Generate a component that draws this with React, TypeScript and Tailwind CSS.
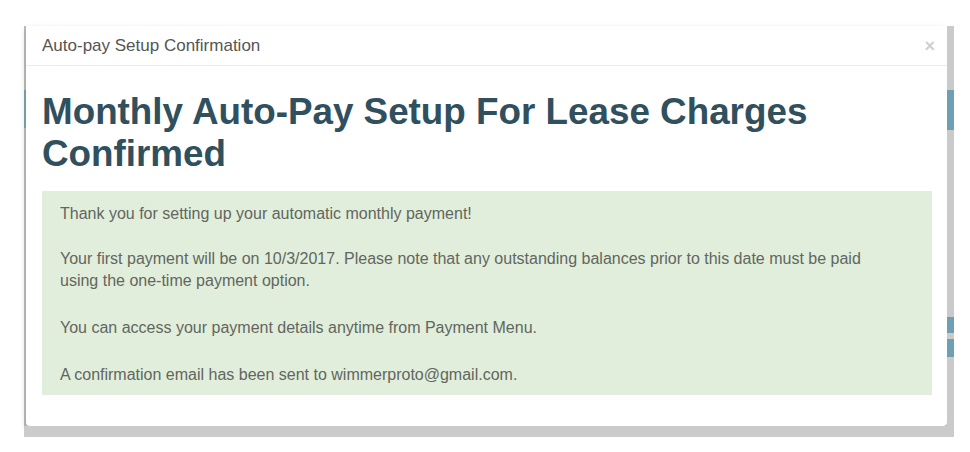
export default function App() {
  return (
    <div className="w-[970px] h-[452px] bg-white" style={{ fontFamily: '"Liberation Sans", Arial, sans-serif' }}>
      <div className="pt-[26px] pl-[24px]">
        <div className="w-[930px] flex flex-col bg-[#c9c9c9]">
          <div className="flex">
            {/* left strip of the page behind */}
            <div className="w-[2px] flex flex-col bg-[#bdbdbd]">
              <div className="h-[64px]" />
              <div className="h-[38px] bg-[#7fa7b4]" />
            </div>
            {/* modal */}
            <div className="w-[921px] h-[400px] bg-white rounded-b-[4px] shadow-[0_3px_6px_rgba(0,0,0,0.2)] flex flex-col">
              <div className="h-[40px] flex items-center justify-between pl-[16px] pr-[12px] border-b border-[#ececec]">
                <span className="text-[17px] text-[#555555]">Auto-pay Setup Confirmation</span>
                <span className="text-[18px] font-bold leading-none text-[#d0d0d0]">×</span>
              </div>
              <div className="pl-[16px] pr-[15px] pt-[25px]">
                <h1 className="text-[36.8px] leading-[42px] font-bold text-[#30505e] pr-[40px]">
                  Monthly Auto-Pay Setup For Lease Charges Confirmed
                </h1>
                <div className="mt-[16px] bg-[#e1eedb] pl-[18px] pr-[40px] pt-[12px] pb-[9px] text-[16px] leading-[22px] text-[#62665f]">
                  <p className="mb-[23px]">Thank you for setting up your automatic monthly payment!</p>
                  <p className="mb-[25px]">
                    Your first payment will be on 10/3/2017. Please note that any outstanding balances prior to this date must be paid using the one-time payment option.
                  </p>
                  <p className="mb-[25px]">You can access your payment details anytime from Payment Menu.</p>
                  <p>A confirmation email has been sent to wimmerproto@gmail.com.</p>
                </div>
              </div>
            </div>
            {/* right strip of the page behind */}
            <div className="w-[7px] flex flex-col bg-[#cacaca]">
              <div className="h-[64px]" />
              <div className="h-[40px] bg-[#6e9fb3]" />
              <div className="h-[187px]" />
              <div className="h-[16px] bg-[#6e9fb3]" />
              <div className="h-[6px]" />
              <div className="h-[18px] bg-[#6e9fb3]" />
            </div>
          </div>
          <div className="h-[11px] bg-[#cbcbcb]" />
        </div>
      </div>
    </div>
  );
}
